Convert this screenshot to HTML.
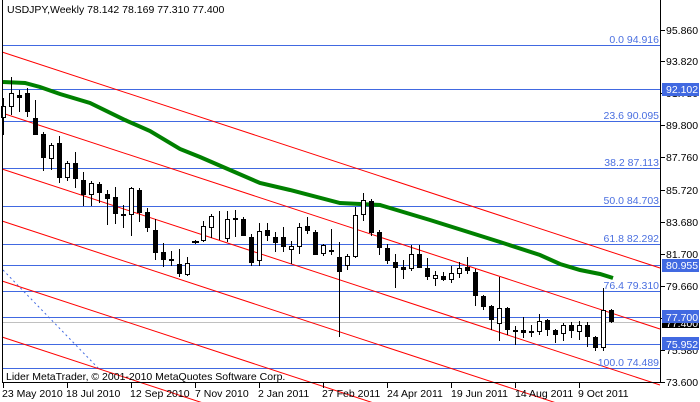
<!DOCTYPE html>
<html><head><meta charset="utf-8"><style>
html,body{margin:0;background:#fff;width:700px;height:402px;overflow:hidden}
svg{display:block}
text{font-family:"Liberation Sans",sans-serif;font-size:10.5px}
</style></head><body>
<svg width="700" height="402" viewBox="0 0 700 402" xmlns="http://www.w3.org/2000/svg">
<rect width="700" height="402" fill="#fff"/>
<g stroke="#4169e1" stroke-width="1">
<line x1="2" y1="45.5" x2="660" y2="45.5"/><line x1="2" y1="89.5" x2="660" y2="89.5"/>
<line x1="2" y1="121.5" x2="660" y2="121.5"/><line x1="2" y1="168.5" x2="660" y2="168.5"/>
<line x1="2" y1="206.5" x2="660" y2="206.5"/><line x1="2" y1="244.5" x2="660" y2="244.5"/>
<line x1="2" y1="265.5" x2="660" y2="265.5"/><line x1="2" y1="291.5" x2="660" y2="291.5"/>
<line x1="2" y1="317.5" x2="660" y2="317.5"/><line x1="2" y1="344.5" x2="660" y2="344.5"/>
<line x1="2" y1="368.5" x2="660" y2="368.5"/>
</g>
<line x1="2" y1="322.5" x2="660" y2="322.5" stroke="#c0c0c0"/>
<line x1="3" y1="270" x2="100" y2="370" stroke="#4169e1" stroke-dasharray="2,3"/>
<g stroke="#ff0000" stroke-width="1">
<line x1="2" y1="52" x2="660" y2="268"/><line x1="2" y1="113" x2="660" y2="329"/>
<line x1="2" y1="169" x2="660" y2="385"/><line x1="2" y1="221" x2="660" y2="437"/>
<line x1="2" y1="281" x2="660" y2="497"/><line x1="2" y1="337" x2="660" y2="553"/>
</g>
<polyline fill="none" stroke="#008000" stroke-width="4" points="3,82 25,83 40,87 60,94 90,103 125,120 150,131 180,149 200,157 230,170 260,183 290,190 340,203 380,205 430,220 500,242 540,255 560,264 580,270 600,274 613,278"/>
<g stroke="#000" stroke-width="1" fill="none">
<path d="M3.5 98V135M11.5 77V115M19.5 90V112M27.5 88V117M35.5 100V135M43.5 132V171M51.5 143V170M59.5 136V183M67.5 161V181M75.5 152V188M83.5 172V206M91.5 181V206M99.5 182V203M107.5 190V225M115.5 187V224M123.5 205V228M131.5 187V236M139.5 188V222M147.5 208V232M155.5 219V260M163.5 243V267M171.5 251V266M179.5 249V277M187.5 257V276M195.5 240V244M203.5 221V242M211.5 214V238M219.5 211V240M227.5 211V242M235.5 210V237M243.5 217V236M251.5 234V266M259.5 223V266M267.5 223V241M275.5 232V252M283.5 227V252M291.5 241V264M299.5 223V254M307.5 217V234M315.5 230V255M323.5 244V256M331.5 229V255M339.5 242V337M347.5 254V270M355.5 207V258M363.5 193V221M371.5 199V236M379.5 230V255M387.5 244V264M395.5 254V288M403.5 260V279M411.5 245V271M419.5 245V268M427.5 258V280M435.5 271V286M443.5 272V281M451.5 266V283M459.5 262V278M467.5 257V274M475.5 269V306M483.5 295V310M491.5 305V330M499.5 277V341M507.5 307V335M515.5 326V345M523.5 317V338M531.5 325V337M539.5 314V335M547.5 319V336M555.5 329V343M563.5 323V341M571.5 322V338M579.5 321V340M587.5 322V347M595.5 336V351M603.5 288V351M611.5 309V323"/>
</g>
<g fill="#000">
<rect x="25" y="93" width="5" height="19"/><rect x="33" y="118" width="5" height="17"/><rect x="41" y="134" width="5" height="24"/><rect x="57" y="143" width="5" height="35"/><rect x="73" y="163" width="5" height="16"/><rect x="81" y="180" width="5" height="15"/><rect x="97" y="184" width="5" height="9"/><rect x="105" y="194" width="5" height="5"/><rect x="113" y="197" width="5" height="17"/><rect x="137" y="190" width="5" height="23"/><rect x="145" y="212" width="5" height="16"/><rect x="153" y="230" width="5" height="23"/><rect x="161" y="252" width="5" height="8"/><rect x="177" y="264" width="5" height="10"/><rect x="17" y="95" width="5" height="3"/><rect x="121" y="214" width="5" height="2"/><rect x="169" y="259" width="5" height="2"/><rect x="192" y="241" width="7" height="2"/><rect x="233" y="218" width="5" height="2"/>
<rect x="241" y="219" width="5" height="17"/><rect x="249" y="237" width="5" height="26"/><rect x="265" y="230" width="5" height="6"/><rect x="273" y="237" width="5" height="6"/><rect x="281" y="237" width="5" height="10"/><rect x="305" y="226" width="5" height="5"/><rect x="313" y="232" width="5" height="23"/><rect x="329" y="250" width="5" height="2"/><rect x="337" y="257" width="5" height="15"/><rect x="369" y="201" width="5" height="32"/><rect x="377" y="232" width="5" height="16"/><rect x="385" y="248" width="5" height="13"/><rect x="393" y="262" width="5" height="6"/><rect x="401" y="267" width="5" height="3"/><rect x="417" y="254" width="5" height="14"/><rect x="425" y="268" width="5" height="9"/><rect x="441" y="276" width="5" height="4"/><rect x="465" y="267" width="5" height="4"/><rect x="473" y="272" width="5" height="24"/><rect x="481" y="296" width="5" height="11"/><rect x="489" y="306" width="5" height="14"/><rect x="505" y="308" width="5" height="22"/><rect x="513" y="330" width="5" height="2"/><rect x="521" y="330" width="5" height="3"/><rect x="529" y="331" width="5" height="2"/><rect x="545" y="320" width="5" height="10"/><rect x="553" y="330" width="5" height="5"/><rect x="569" y="325" width="5" height="6"/><rect x="585" y="325" width="5" height="12"/><rect x="593" y="337" width="5" height="11"/><rect x="609" y="310" width="5" height="12"/>
</g>
<g fill="#fff" stroke="#000">
<rect x="1.5" y="106.5" width="4" height="11"/><rect x="9.5" y="93.5" width="4" height="13"/><rect x="49.5" y="145.5" width="4" height="13"/><rect x="65.5" y="163.5" width="4" height="14"/><rect x="89.5" y="183.5" width="4" height="11"/><rect x="129.5" y="188.5" width="4" height="26"/><rect x="185.5" y="263.5" width="4" height="11"/><rect x="201.5" y="226.5" width="4" height="14"/><rect x="209.5" y="216.5" width="4" height="11"/><rect x="225.5" y="219.5" width="4" height="19"/><rect x="257.5" y="231.5" width="4" height="29"/><rect x="289.5" y="246.5" width="4" height="3"/><rect x="297.5" y="227.5" width="4" height="19"/><rect x="321.5" y="245.5" width="4" height="8"/><rect x="345.5" y="256.5" width="4" height="9"/><rect x="353.5" y="215.5" width="4" height="41"/><rect x="361.5" y="200.5" width="4" height="14"/><rect x="409.5" y="254.5" width="4" height="14"/><rect x="433.5" y="275.5" width="4" height="3"/><rect x="449.5" y="273.5" width="4" height="6"/><rect x="457.5" y="268.5" width="4" height="5"/><rect x="497.5" y="308.5" width="4" height="15"/><rect x="537.5" y="321.5" width="4" height="10"/><rect x="561.5" y="325.5" width="4" height="8"/><rect x="577.5" y="325.5" width="4" height="6"/><rect x="601.5" y="310.5" width="4" height="37"/>
</g>
<g fill="#4a6fe0" text-anchor="end">
<text x="659" y="43">0.0 94.916</text><text x="659" y="119">23.6 90.095</text><text x="659" y="166">38.2 87.113</text><text x="659" y="204">50.0 84.703</text><text x="659" y="242">61.8 82.292</text><text x="659" y="289">76.4 79.310</text><text x="659" y="366">100.0 74.489</text>
</g>
<text x="6" y="380" fill="#000">Lider MetaTrader, © 2001-2010 MetaQuotes Software Corp.</text>
<text x="7" y="13" fill="#000">USDJPY,Weekly  78.142 78.169 77.310 77.400</text>
<line x1="2.5" y1="0" x2="2.5" y2="383" stroke="#000"/>
<line x1="660.5" y1="0" x2="660.5" y2="383" stroke="#000"/>
<line x1="2" y1="382.5" x2="661" y2="382.5" stroke="#000"/>
<g stroke="#000"><path d="M661 30.5h4M661 61.5h4M661 93.5h4M661 125.5h4M661 157.5h4M661 190.5h4M661 222.5h4M661 254.5h4M661 286.5h4M661 318.5h4M661 350.5h4M661 382.5h4M3.5 383v5M67.5 383v5M131.5 383v5M195.5 383v5M259.5 383v5M323.5 383v5M387.5 383v5M451.5 383v5M515.5 383v5M579.5 383v5"/></g>
<g fill="#000">
<text x="666" y="34">95.860</text><text x="666" y="65">93.820</text><text x="666" y="97">91.780</text><text x="666" y="129">89.800</text><text x="666" y="161">87.760</text><text x="666" y="194">85.720</text><text x="666" y="226">83.680</text><text x="666" y="258">81.700</text><text x="666" y="290">79.660</text><text x="666" y="354">75.580</text><text x="666" y="386">73.600</text>
</g>
<rect x="662" y="316" width="37" height="12" fill="#000"/><text x="666" y="327" fill="#fff">77.400</text>
<rect x="662" y="83" width="37" height="13" fill="#4169e1"/><text x="666" y="93" fill="#fff">92.102</text>
<rect x="662" y="259" width="37" height="13" fill="#4169e1"/><text x="666" y="269" fill="#fff">80.955</text>
<rect x="662" y="310" width="37" height="13" fill="#4169e1"/><text x="666" y="321" fill="#fff">77.700</text>
<rect x="662" y="337" width="37" height="13" fill="#4169e1"/><text x="666" y="348" fill="#fff">75.952</text>
<g fill="#000">
<text x="2" y="397">23 May 2010</text><text x="66" y="397">18 Jul 2010</text><text x="130" y="397">12 Sep 2010</text><text x="195" y="397">7 Nov 2010</text><text x="258" y="397">2 Jan 2011</text><text x="322" y="397">27 Feb 2011</text><text x="387" y="397">24 Apr 2011</text><text x="451" y="397">19 Jun 2011</text><text x="515" y="397">14 Aug 2011</text><text x="578" y="397">9 Oct 2011</text>
</g>
</svg>
</body></html>
